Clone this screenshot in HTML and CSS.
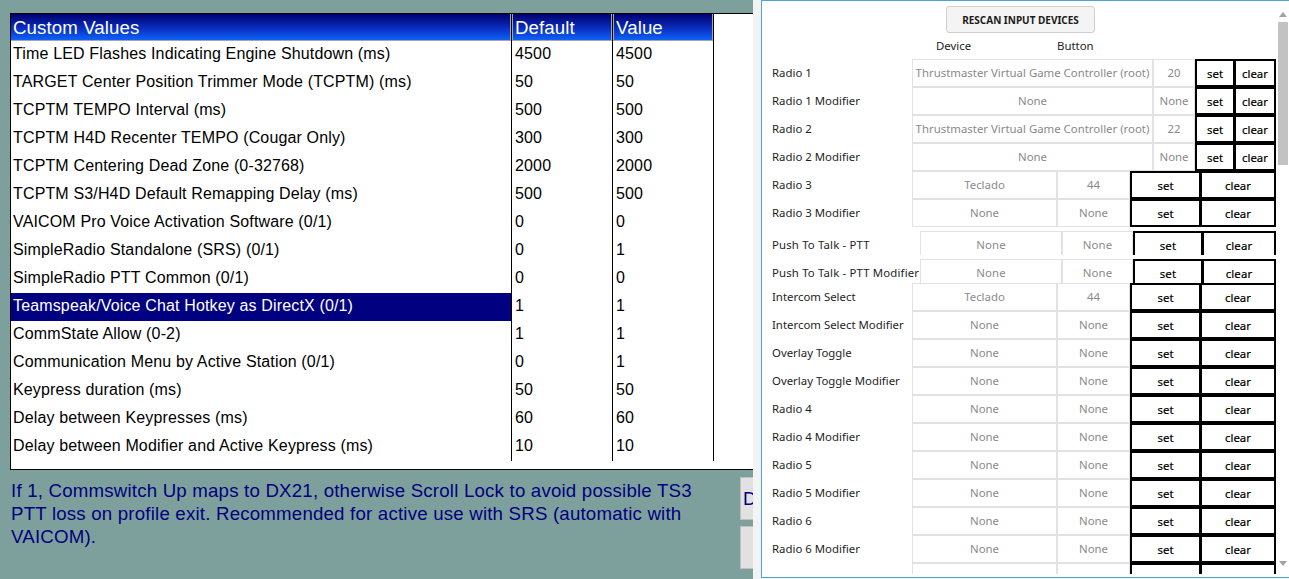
FILE: index.html
```html
<!DOCTYPE html>
<html>
<head>
<meta charset="utf-8">
<title>Custom Values</title>
<link rel="stylesheet" href="styles.css">
</head>
<body>
<div class="app">
  <div class="left">
    <div class="table">
      <div class="grid">
        <div class="c c1 h"><div class="hd">Custom Values</div></div>
        <div class="c c2 h"><div class="hd">Default</div></div>
        <div class="c c3 h"><div class="hd">Value</div></div>
        <div class="c c4 h blank"></div>

        <div class="c c1">Time LED Flashes Indicating Engine Shutdown (ms)</div><div class="c c2">4500</div><div class="c c3">4500</div><div class="c c4"></div>
        <div class="c c1">TARGET Center Position Trimmer Mode (TCPTM) (ms)</div><div class="c c2">50</div><div class="c c3">50</div><div class="c c4"></div>
        <div class="c c1">TCPTM TEMPO Interval (ms)</div><div class="c c2">500</div><div class="c c3">500</div><div class="c c4"></div>
        <div class="c c1">TCPTM H4D Recenter TEMPO (Cougar Only)</div><div class="c c2">300</div><div class="c c3">300</div><div class="c c4"></div>
        <div class="c c1">TCPTM Centering Dead Zone (0-32768)</div><div class="c c2">2000</div><div class="c c3">2000</div><div class="c c4"></div>
        <div class="c c1">TCPTM S3/H4D Default Remapping Delay (ms)</div><div class="c c2">500</div><div class="c c3">500</div><div class="c c4"></div>
        <div class="c c1">VAICOM Pro Voice Activation Software (0/1)</div><div class="c c2">0</div><div class="c c3">0</div><div class="c c4"></div>
        <div class="c c1">SimpleRadio Standalone (SRS) (0/1)</div><div class="c c2">0</div><div class="c c3">1</div><div class="c c4"></div>
        <div class="c c1">SimpleRadio PTT Common (0/1)</div><div class="c c2">0</div><div class="c c3">0</div><div class="c c4"></div>
        <div class="c c1 sel">Teamspeak/Voice Chat Hotkey as DirectX (0/1)</div><div class="c c2">1</div><div class="c c3">1</div><div class="c c4"></div>
        <div class="c c1">CommState Allow (0-2)</div><div class="c c2">1</div><div class="c c3">1</div><div class="c c4"></div>
        <div class="c c1">Communication Menu by Active Station (0/1)</div><div class="c c2">0</div><div class="c c3">1</div><div class="c c4"></div>
        <div class="c c1">Keypress duration (ms)</div><div class="c c2">50</div><div class="c c3">50</div><div class="c c4"></div>
        <div class="c c1">Delay between Keypresses (ms)</div><div class="c c2">60</div><div class="c c3">60</div><div class="c c4"></div>
        <div class="c c1">Delay between Modifier and Active Keypress (ms)</div><div class="c c2">10</div><div class="c c3">10</div><div class="c c4"></div>
      </div>
    </div>
    <div class="bottom">
      <p class="desc">If 1, Commswitch Up maps to DX21, otherwise Scroll Lock to avoid possible TS3 PTT loss on profile exit. Recommended for active use with SRS (automatic with VAICOM).</p>
      <div class="btns">
        <div class="wbtn">D</div>
        <div class="wbtn"></div>
      </div>
    </div>
  </div>
  <div class="strip"></div>
  <div class="panel">
    <div class="scroll">
      <div class="top"><button class="rescan">RESCAN INPUT DEVICES</button></div>
      <div class="heads"><span class="h-dev">Device</span><span>Button</span></div>

      <div class="rows">
      <div class="row a"><span class="lbl">Radio 1</span><span class="cell">Thrustmaster Virtual Game Controller (root)</span><span class="cell">20</span><span class="act">set</span><span class="act clr">clear</span></div>
      <div class="row a"><span class="lbl">Radio 1 Modifier</span><span class="cell">None</span><span class="cell">None</span><span class="act">set</span><span class="act clr">clear</span></div>
      <div class="row a"><span class="lbl">Radio 2</span><span class="cell">Thrustmaster Virtual Game Controller (root)</span><span class="cell">22</span><span class="act">set</span><span class="act clr">clear</span></div>
      <div class="row a"><span class="lbl">Radio 2 Modifier</span><span class="cell">None</span><span class="cell">None</span><span class="act">set</span><span class="act clr">clear</span></div>
      <div class="row b"><span class="lbl">Radio 3</span><span class="cell">Teclado</span><span class="cell">44</span><span class="act">set</span><span class="act clr">clear</span></div>
      <div class="row b"><span class="lbl">Radio 3 Modifier</span><span class="cell">None</span><span class="cell">None</span><span class="act">set</span><span class="act clr">clear</span></div>
      <div class="row c"><span class="lbl">Push To Talk - PTT</span><span class="cell">None</span><span class="cell">None</span><span class="act">set</span><span class="act clr">clear</span></div>
      <div class="row c"><span class="lbl">Push To Talk - PTT Modifier</span><span class="cell">None</span><span class="cell">None</span><span class="act">set</span><span class="act clr">clear</span></div>
      <div class="row b"><span class="lbl">Intercom Select</span><span class="cell">Teclado</span><span class="cell">44</span><span class="act">set</span><span class="act clr">clear</span></div>
      <div class="row b"><span class="lbl">Intercom Select Modifier</span><span class="cell">None</span><span class="cell">None</span><span class="act">set</span><span class="act clr">clear</span></div>
      <div class="row b"><span class="lbl">Overlay Toggle</span><span class="cell">None</span><span class="cell">None</span><span class="act">set</span><span class="act clr">clear</span></div>
      <div class="row b"><span class="lbl">Overlay Toggle Modifier</span><span class="cell">None</span><span class="cell">None</span><span class="act">set</span><span class="act clr">clear</span></div>
      <div class="row b"><span class="lbl">Radio 4</span><span class="cell">None</span><span class="cell">None</span><span class="act">set</span><span class="act clr">clear</span></div>
      <div class="row b"><span class="lbl">Radio 4 Modifier</span><span class="cell">None</span><span class="cell">None</span><span class="act">set</span><span class="act clr">clear</span></div>
      <div class="row b"><span class="lbl">Radio 5</span><span class="cell">None</span><span class="cell">None</span><span class="act">set</span><span class="act clr">clear</span></div>
      <div class="row b"><span class="lbl">Radio 5 Modifier</span><span class="cell">None</span><span class="cell">None</span><span class="act">set</span><span class="act clr">clear</span></div>
      <div class="row b"><span class="lbl">Radio 6</span><span class="cell">None</span><span class="cell">None</span><span class="act">set</span><span class="act clr">clear</span></div>
      <div class="row b"><span class="lbl">Radio 6 Modifier</span><span class="cell">None</span><span class="cell">None</span><span class="act">set</span><span class="act clr">clear</span></div>
      <div class="row b"><span class="lbl"></span><span class="cell"></span><span class="cell"></span><span class="act"></span><span class="act clr"></span></div>
      </div>
    </div>
    <div class="sbar">
      <span class="arrow up"></span>
      <div class="thumb"></div>
      <div class="track"></div>
      <span class="arrow down"></span>
    </div>
  </div>
</div>
</body>
</html>
```

FILE: styles.css
```css
html, body {
  margin: 0;
  padding: 0;
}
body {
  width: 1289px;
  height: 579px;
  overflow: hidden;
  background: #f3f3f3;
}
.app {
  display: flex;
  width: 1289px;
  height: 579px;
  overflow: hidden;
}

/* ---------- left window ---------- */
.left {
  flex: 0 0 753px;
  box-sizing: border-box;
  height: 579px;
  padding: 13px 0 0 10px;
  background: #7ea09d;
  overflow: hidden;
  font-family: "Liberation Sans", Arial, sans-serif;
}
.table {
  width: 760px;
  border: 1px solid #000;
  background: #fff;
  padding-bottom: 8px;
}
.grid {
  display: grid;
  grid-template-columns: 500px 101px 101px 1fr;
  grid-template-rows: 27px repeat(15, 28px);
}
.c {
  box-sizing: border-box;
  font-size: 16px;
  letter-spacing: 0.15px;
  line-height: 18px;
  padding: 4px 0 0 2px;
  color: #000;
  white-space: nowrap;
  overflow: hidden;
}
.c2, .c3, .c4 {
  border-left: 1px solid #000;
  padding-left: 3px;
}
.c.h {
  padding: 0;
}
.hd {
  box-sizing: border-box;
  height: 27px;
  background: linear-gradient(to bottom, #00006e 0%, #0a2ec0 55%, #0c62f8 100%);
  border: 1px solid #a6a6a6;
  border-top: none;
  color: #fff;
  font-size: 18.67px;
  letter-spacing: 0.1px;
  line-height: 28px;
  padding-left: 2px;
}
.c1 .hd {
  border-left: none;
}
.sel {
  background: #000080;
  color: #fff;
}

.bottom {
  display: flex;
  align-items: flex-start;
}
.desc {
  flex: 0 0 700px;
  margin: 9px 29px 0 1px;
  color: #000080;
  font-size: 18.67px;
  letter-spacing: 0.2px;
  line-height: 23px;
}
.btns {
  display: flex;
  flex-direction: column;
  gap: 6px;
  margin-top: 7px;
}
.wbtn {
  box-sizing: border-box;
  width: 40px;
  height: 43px;
  background: #e1e1e1;
  border: 1px solid #c0c0c0;
  color: #000080;
  font-size: 18.67px;
  line-height: 41px;
  padding-left: 2px;
}

.strip {
  flex: 0 0 8px;
  background: #f3f3f3;
}

/* ---------- right panel ---------- */
.panel {
  flex: 0 0 529px;
  box-sizing: border-box;
  height: 578px;
  display: flex;
  background: #fff;
  border: 1px solid #4aa3dc;
  font-family: "Noto Sans", "Open Sans", sans-serif;
}
.scroll {
  flex: 0 0 514px;
  height: 573px;
  overflow: hidden;
}
.top {
  padding: 5px 0 0 184px;
  height: 27px;
}
.rescan {
  box-sizing: border-box;
  width: 149px;
  height: 27px;
  margin: 0;
  padding: 0;
  background: #f4f4f4;
  border: 1px solid #cfcfcf;
  border-radius: 3px;
  font-family: "Noto Sans", sans-serif;
  font-weight: bold;
  font-size: 10px;
  color: #1b1b1b;
}
.heads {
  margin-top: 4px;
  height: 18px;
  line-height: 18px;
  font-size: 11.4px;
  color: #222;
  padding-left: 174px;
  display: flex;
}
.h-dev {
  width: 121px;
}
.rows {
  margin-top: 4px;
  display: grid;
  grid-auto-rows: 28px;
}
.row {
  display: grid;
  height: 28px;
  padding-left: 10px;
  font-size: 11.4px;
  line-height: 28px;
}
.row.a { grid-template-columns: 140px 241px 42px 40px 41px; }
.row.b { grid-template-columns: 140px 145px 73px 71px 75px; }
.row.c { grid-template-columns: 148px 142px 71px 70px 73px; }

.lbl {
  overflow: hidden;
  color: #1e1e1e;
  white-space: nowrap;
}
.cell, .act {
  box-sizing: border-box;
  height: 28px;
  text-align: center;
  white-space: nowrap;
  overflow: hidden;
}
.cell {
  border: 1px solid #e2e2e2;
  line-height: 26px;
  color: #8a8a8a;
}
.act {
  border: 2px solid #000;
  line-height: 25px;
  color: #000;
  -webkit-text-stroke: 0.2px #000;
}
.clr {
  margin-left: -1px;
}

.sbar {
  flex: 0 0 13px;
  display: flex;
  flex-direction: column;
  align-items: center;
  background: #fff;
}
.arrow {
  width: 0;
  height: 0;
  border-left: 4px solid transparent;
  border-right: 4px solid transparent;
}
.arrow.up {
  margin-top: 11px;
  border-bottom: 5px solid #a3a3a3;
}
.thumb {
  margin-top: 5px;
  width: 10px;
  height: 143px;
  background: #c2c2c2;
}
.track {
  flex: 1;
}
.arrow.down {
  margin-bottom: 11px;
  border-top: 5px solid #a3a3a3;
}
```
